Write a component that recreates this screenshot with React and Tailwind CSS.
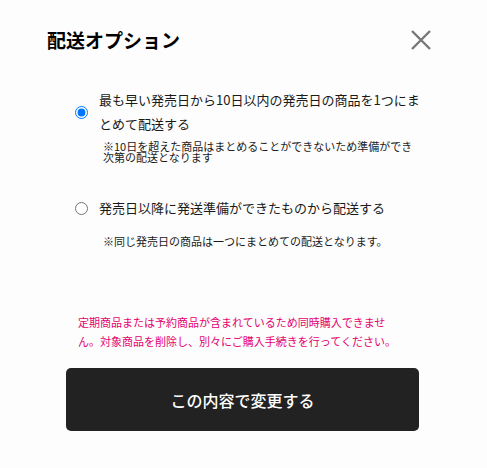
import React, { useState } from 'react';

const font = { fontFamily: '"Noto Sans CJK JP", "Noto Sans", sans-serif' };

const App = () => {
  const [option, setOption] = useState('bundle');

  return (
    <div className="w-[487px] h-[468px] bg-[#fdfdfd] text-[#1a1a1a]" style={font}>
      {/* Header */}
      <div className="flex items-center justify-between pt-[26px] pl-[47px] pr-[56px]">
        <h2 className="text-[19px] leading-[28px] font-bold text-black">配送オプション</h2>
        <button className="w-[20px] h-[20px] flex items-center justify-center">
          <svg width="20" height="20" viewBox="0 0 20 20">
            <path d="M1 1 L19 19 M19 1 L1 19" stroke="#777" strokeWidth="2.4" fill="none" />
          </svg>
        </button>
      </div>

      {/* Options */}
      <div className="pl-[75px] mt-[34px]">
        <label className="flex items-center gap-[11px] cursor-pointer">
          <input
            type="radio"
            name="delivery"
            className="w-[13px] h-[13px] m-0 shrink-0"
            checked={option === 'bundle'}
            onChange={() => setOption('bundle')}
          />
          <span className="w-[322px] text-[13px] leading-[24px]">
            最も早い発売日から10日以内の発売日の商品を1つにまとめて配送する
          </span>
        </label>
        <p className="ml-[28px] mt-[5px] w-[316px] text-[11px] leading-[11px]">
          ※10日を超えた商品はまとめることができないため準備ができ次第の配送となります
        </p>

        <label className="flex items-center gap-[11px] cursor-pointer mt-[33px]">
          <input
            type="radio"
            name="delivery"
            className="w-[13px] h-[13px] m-0 shrink-0"
            checked={option === 'each'}
            onChange={() => setOption('each')}
          />
          <span className="text-[13px] leading-[24px]">発売日以降に発送準備ができたものから配送する</span>
        </label>
        <p className="ml-[28px] mt-[16px] text-[11px] leading-[11px]">
          ※同じ発売日の商品は一つにまとめての配送となります。
        </p>
      </div>

      {/* Warning */}
      <p className="ml-[78px] mt-[66px] w-[324px] text-[11px] leading-[19px] text-[#e4006e]">
        定期商品または予約商品が含まれているため同時購入できません。対象商品を削除し、別々にご購入手続きを行ってください。
      </p>

      {/* Submit */}
      <div className="pl-[66px] mt-[17px]">
        <button className="w-[353px] h-[63px] rounded-[5px] bg-[#222] text-white text-[16px] font-medium">
          この内容で変更する
        </button>
      </div>
    </div>
  );
};

export default App;
